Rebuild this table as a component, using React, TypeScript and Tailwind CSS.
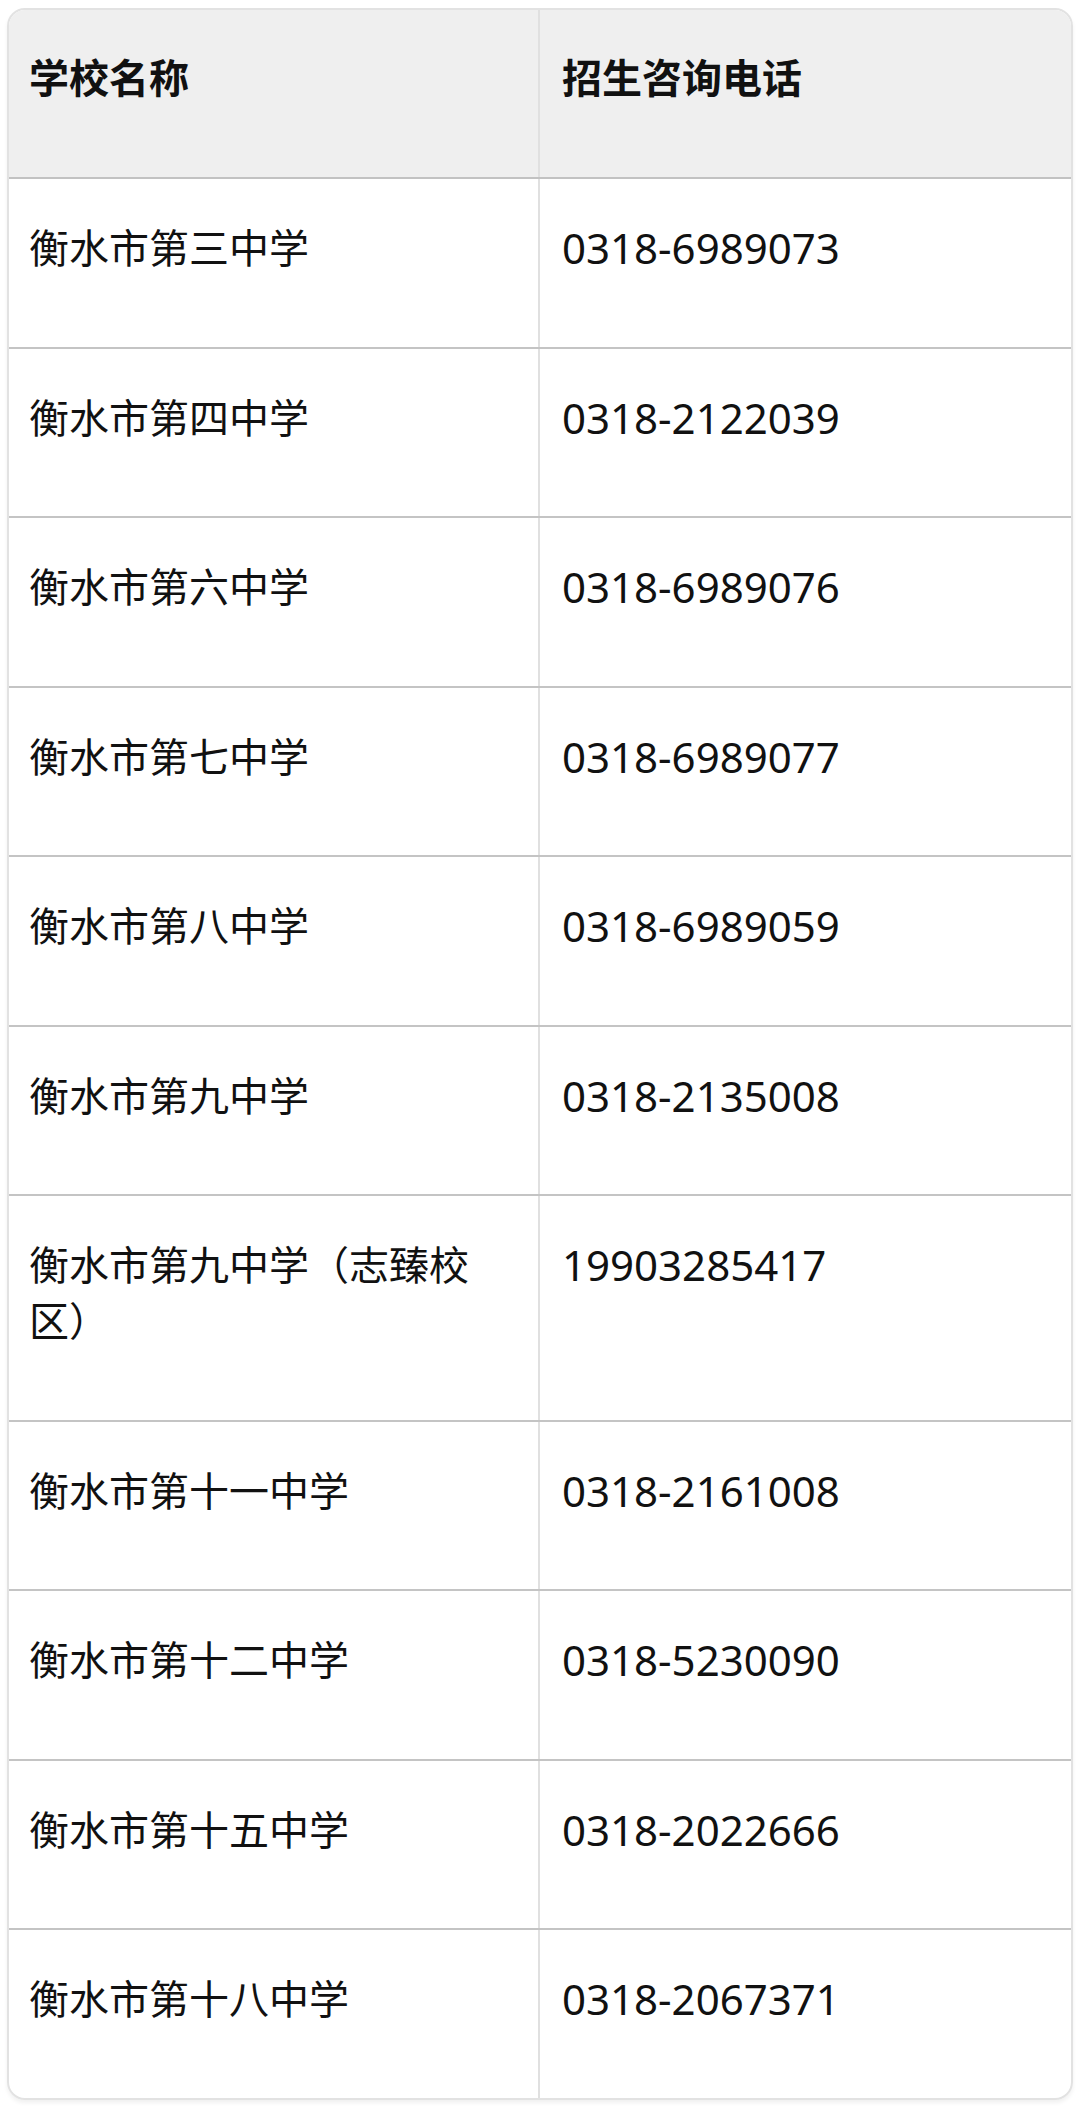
import React from "react";

// 学校名称 / 招生咨询电话
const schools = [
  { name: "衡水市第三中学", tel: "0318-6989073" },
  { name: "衡水市第四中学", tel: "0318-2122039" },
  { name: "衡水市第六中学", tel: "0318-6989076" },
  { name: "衡水市第七中学", tel: "0318-6989077" },
  { name: "衡水市第八中学", tel: "0318-6989059" },
  { name: "衡水市第九中学", tel: "0318-2135008" },
  { name: "衡水市第九中学（志臻校区）", tel: "19903285417" },
  { name: "衡水市第十一中学", tel: "0318-2161008" },
  { name: "衡水市第十二中学", tel: "0318-5230090" },
  { name: "衡水市第十五中学", tel: "0318-2022666" },
  { name: "衡水市第十八中学", tel: "0318-2067371" },
];

export default function App() {
  return (
    <div className="min-h-screen bg-white pt-[8px] px-[7px] font-['Noto_Sans','Noto_Sans_CJK_SC',sans-serif] text-[40px] leading-[56px] text-[#111]">
      <div className="rounded-[18px] border-2 border-[#e2e2e2] overflow-hidden shadow-[0_3px_4px_rgba(0,0,0,0.06)]">
        {/* 表头 */}
        <div className="grid grid-cols-2 bg-[#efefef] border-b-2 border-[#c2c2c2] font-bold">
          <div className="pl-[20px] pr-[22px] pt-[40px] pb-[71px] border-r-2 border-[#e0e0e0]">
            学校名称
          </div>
          <div className="pl-[22px] pr-[22px] pt-[40px] pb-[71px]">
            招生咨询电话
          </div>
        </div>

        {schools.map((s, i) => (
          <div
            key={s.name}
            className={
              i === schools.length - 1
                ? "grid grid-cols-2"
                : "grid grid-cols-2 border-b-2 border-[#c4c4c4]"
            }
          >
            <div className="pl-[20px] pr-[22px] pt-[41px] pb-[70.5px] border-r-2 border-[#e0e0e0]">
              {s.name}
            </div>
            <div className="pl-[22px] pr-[22px] pt-[41px] pb-[70.5px] text-[42px]">
              {s.tel}
            </div>
          </div>
        ))}
      </div>
    </div>
  );
}
